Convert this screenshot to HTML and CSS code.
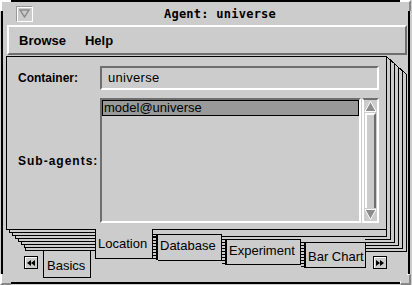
FILE: index.html
```html
<!DOCTYPE html>
<html>
<head>
<meta charset="utf-8">
<link rel="stylesheet" href="styles.css">
</head>
<body>
<div class="window">
  <svg class="stack" width="412" height="285" viewBox="0 0 412 285">
    <g stroke="#000" stroke-width="1" fill="none" shape-rendering="crispEdges">
      <path d="M386.5 56.5 L406.5 74.5"/>
      <path d="M390.5 60 V239.5 H365"/>
      <path d="M394.5 63.5 V242.5 H365"/>
      <path d="M398.5 67 V245.5 H365"/>
      <path d="M402.5 70.5 V248.5 H365"/>
      <path d="M406.5 74 V251.5 H365"/>
      <path d="M386.5 229 V236.5 H150"/>
      <path d="M9.5 229 V232.5 H95"/>
      <path d="M12.5 232 V235.5 H95"/>
      <path d="M15.5 235 V238.5 H95"/>
      <path d="M18.5 238 V241.5 H95"/>
      <path d="M21.5 241 V244.5 H95"/>
      <path d="M24.5 244 V247.5 H95"/>
      <path d="M25.5 247 V250.5 H95"/>
    </g>
  </svg>
  <div class="corner c-tl"></div>
  <div class="corner c-tr"></div>
  <div class="corner c-bl"></div>
  <div class="corner c-br"></div>
  <div class="titlebar">
    <div class="wm-btn">
      <svg width="11" height="9" viewBox="0 0 11 9"><path d="M1 1 H10 L5.5 8 Z" fill="none" stroke="#8c8c8c" stroke-width="1.4"/></svg>
    </div>
    <div class="title">Agent: universe</div>
  </div>
  <div class="menubar">
    <span class="menu">Browse</span>
    <span class="menu">Help</span>
  </div>
  <div class="notebook">
    <div class="page">
      <div class="row row-container">
        <div class="label">Container:</div>
        <div class="entry">universe</div>
      </div>
      <div class="row row-sub">
        <div class="label label-sub">Sub-agents:</div>
        <div class="listframe">
          <div class="list">
            <div class="item selected">model@universe</div>
          </div>
          <div class="scrollbar">
            <div class="sb-arrow"><svg width="13" height="13" viewBox="0 0 13 13"><path d="M6.5 1.5 L12 11.5 H1 Z" fill="#8c8c8c" stroke="#fff" stroke-width="1"/></svg></div>
            <div class="sb-trough"></div>
            <div class="sb-arrow"><svg width="13" height="13" viewBox="0 0 13 13"><path d="M6.5 11.5 L12 1.5 H1 Z" fill="#8c8c8c" stroke="#fff" stroke-width="1"/></svg></div>
          </div>
        </div>
      </div>
    </div>
    <div class="tabrow">
      <div class="navbtn nav-left"><svg width="8" height="6" viewBox="0 0 8 6"><path d="M0 3 L4 0 V6 Z M4 3 L8 0 V6 Z" fill="#000"/></svg></div>
      <div class="tab tab-basics">Basics</div>
      <div class="tab tab-current">Location</div>
      <div class="hatch hatch-db"></div>
      <div class="tab tab-db">Database</div>
      <div class="hatch hatch-exp"></div>
      <div class="tab tab-exp">Experiment</div>
      <div class="hatch hatch-bar"></div>
      <div class="tab tab-bar">Bar Chart</div>
      <div class="navbtn nav-right"><svg width="8" height="6" viewBox="0 0 8 6"><path d="M8 3 L4 0 V6 Z M4 3 L0 0 V6 Z" fill="#000"/></svg></div>
    </div>
  </div>
</div>
</body>
</html>
```
FILE: styles.css
```css
* { box-sizing: border-box; }
html, body { margin: 0; padding: 0; background: #cccccc; }
body { width: 412px; height: 285px; overflow: hidden; font-family: "Liberation Sans", Arial, sans-serif; }

.window {
  position: relative;
  z-index: 0;
  margin-left: 1px;
  width: 409px;
  height: 284px;
  border: 2px solid #000;
  background: #cccccc;
}
.stack { position: absolute; left: -3px; top: -2px; z-index: -1; }

.corner { position: absolute; width: 11px; height: 11px; z-index: 2; background: #cccccc; }
.c-tl { left: -3px; top: -2px; border-top: 2px solid #fff; border-left: 2px solid #fff; width: 11px; height: 11px;
  clip-path: polygon(0 0, 100% 0, 100% 4px, 4px 4px, 4px 100%, 0 100%); }
.c-tr { right: -3px; top: -2px; border-top: 2px solid #fff; border-right: 2px solid #888;
  clip-path: polygon(0 0, 100% 0, 100% 100%, calc(100% - 4px) 100%, calc(100% - 4px) 4px, 0 4px); }
.c-bl { left: -3px; bottom: -3px; border-left: 2px solid #fff; border-bottom: 2px solid #888;
  clip-path: polygon(0 0, 4px 0, 4px calc(100% - 4px), 100% calc(100% - 4px), 100% 100%, 0 100%); }
.c-br { right: -3px; bottom: -3px; border-right: 2px solid #888; border-bottom: 2px solid #888; border-top: 1px solid #fff; border-left: 1px solid #fff;
  clip-path: polygon(calc(100% - 4px) 0, 100% 0, 100% 100%, 0 100%, 0 calc(100% - 4px), calc(100% - 4px) calc(100% - 4px)); }

.titlebar {
  height: 23px;
  display: flex;
  align-items: center;
  padding-left: 13px;
}
.wm-btn {
  width: 17px; height: 16px;
  border: 1px solid #999;
  border-right-color: #fff; border-bottom-color: #fff;
  box-shadow: inset 1px 1px 0 #fff;
  display: flex; align-items: center; justify-content: center;
}
.title {
  flex: 1;
  text-align: center;
  font-family: "DejaVu Sans Mono", "Liberation Mono", monospace;
  font-weight: bold;
  font-size: 12px;
  letter-spacing: 0.25px;
  padding-right: 1px;
}

.menubar {
  margin: 0 1px 0 4px;
  height: 30px;
  border-top: 2px solid #fff;
  border-left: 2px solid #fff;
  border-bottom: 2px solid #6e6e6e;
  border-right: 2px solid #6e6e6e;
  display: flex;
  align-items: center;
  padding-left: 10px;
  gap: 19px;
  font-weight: bold;
  font-size: 13px;
}

.notebook { position: relative; padding-left: 3px; padding-top: 1px; }

.page {
  width: 381px;
  height: 174px;
  border: 1px solid #000;
  padding: 9px 7px 6px 11px;
  display: flex;
  flex-direction: column;
  gap: 8px;
}
.row { display: flex; }
.label { width: 82px; font-weight: bold; font-size: 12px; }
.row-container { align-items: center; height: 24px; }
.row-sub { flex: 1; align-items: center; }
.label-sub { letter-spacing: 1px; }

.entry {
  flex: 1;
  height: 24px;
  border-top: 2px solid #6e6e6e;
  border-left: 2px solid #6e6e6e;
  border-bottom: 2px solid #fff;
  border-right: 2px solid #fff;
  padding-left: 6px;
  font-size: 13px;
  line-height: 20px;
  letter-spacing: 0.3px;
}

.listframe { flex: 1; align-self: stretch; display: flex; }
.list {
  flex: 1;
  border-top: 2px solid #6e6e6e;
  border-left: 2px solid #6e6e6e;
  border-bottom: 2px solid #fff;
  border-right: 2px solid #fff;
  padding: 0;
}
.item { font-size: 13px; height: 16px; line-height: 14px; padding-left: 1px; }
.item.selected { background: #999999; border: 1px solid #000; }

.scrollbar {
  width: 17px;
  margin-left: 1px;
  border-top: 2px solid #6e6e6e;
  border-left: 2px solid #fff;
  border-bottom: 2px solid #fff;
  border-right: 2px solid #fff;
  display: flex;
  flex-direction: column;
}
.sb-arrow { height: 13px; display: flex; justify-content: center; }
.sb-trough {
  flex: 1;
  margin: 0 1px;
  border-left: 2px solid #fff;
  border-right: 2px solid #6e6e6e;
  border-top: 2px solid #fff;
}

.tabrow {
  display: flex;
  align-items: flex-start;
  margin-top: -1px;
  height: 54px;
  font-size: 13px;
}
.tabrow > * { flex-shrink: 0; }
.navbtn {
  width: 14px; height: 13px;
  border: 1px solid #000;
  box-shadow: inset 1px 1px 0 #fff;
  display: flex; align-items: center; justify-content: center;
}
.nav-left { margin-left: 18px; margin-top: 27px; }
.nav-right { margin-left: 7px; margin-top: 27px; }

.tab {
  background: #cccccc;
  border: 1px solid #000;
  padding: 0 2px;
  line-height: 22px;
  white-space: nowrap;
}
.tab-basics { margin-left: 5px; margin-top: 21px; width: 48px; height: 28px; padding-top: 4px; padding-left: 3px; }
.tab-current { margin-left: 4px; width: 58px; height: 30px; border-top: none; padding-top: 4px; }
.hatch {
  width: 5px;
  background: repeating-linear-gradient(#000 0 1px, transparent 1px 3px);
  border-right: 2px solid #000;
}
.hatch-db { margin-top: 5px; height: 26px; }
.tab-db { margin-top: 5px; width: 64px; height: 27px; border-left: none; }
.hatch-exp { margin-top: 10px; height: 26px; }
.tab-exp { margin-top: 10px; width: 74px; height: 26px; border-left: none; }
.hatch-bar { margin-top: 13px; height: 26px; }
.tab-bar { margin-top: 13px; width: 60px; height: 26px; border-left: none; padding-top: 3px; }
```
